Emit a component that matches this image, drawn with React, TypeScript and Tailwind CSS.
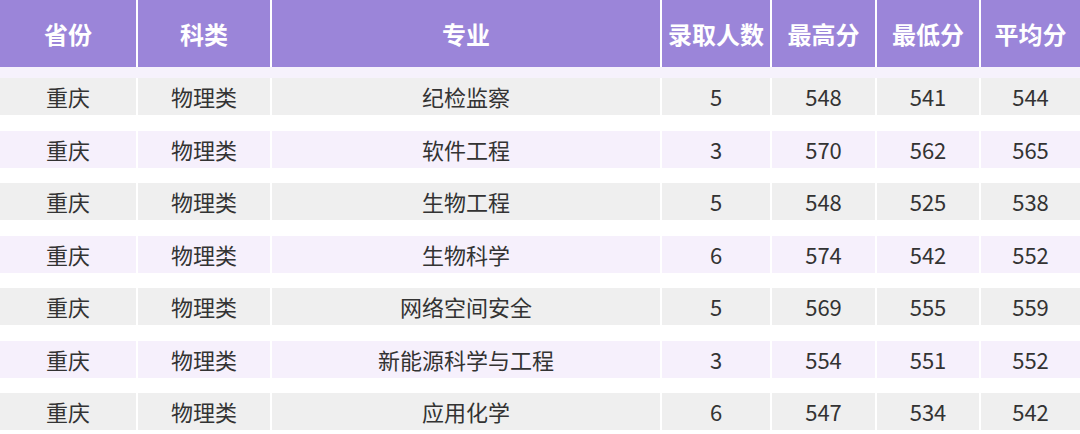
import React from "react";

const rows = [
  ["重庆", "物理类", "纪检监察", "5", "548", "541", "544"],
  ["重庆", "物理类", "软件工程", "3", "570", "562", "565"],
  ["重庆", "物理类", "生物工程", "5", "548", "525", "538"],
  ["重庆", "物理类", "生物科学", "6", "574", "542", "552"],
  ["重庆", "物理类", "网络空间安全", "5", "569", "555", "559"],
  ["重庆", "物理类", "新能源科学与工程", "3", "554", "551", "552"],
  ["重庆", "物理类", "应用化学", "6", "547", "534", "542"],
];

const headers = ["省份", "科类", "专业", "录取人数", "最高分", "最低分", "平均分"];

const grid =
  "grid grid-cols-[136px_132px_388px_108px_103px_102px_1fr] gap-x-[2px]";

export default function App() {
  return (
    <div
      className="w-[1080px] h-[434px] overflow-hidden bg-white"
      style={{ fontFamily: '"Noto Sans CJK SC", "Noto Sans", sans-serif' }}
    >
      <div className={`${grid} h-[67px]`}>
        {headers.map((h) => (
          <div
            key={h}
            className="flex items-center justify-center bg-[#9b85d9] text-white text-[24px] font-bold"
          >
            {h}
          </div>
        ))}
      </div>
      <div className="h-[11px] bg-[#f6f2fc]" />
      <div className="flex flex-col gap-y-[15.5px]">
        {rows.map((r, i) => (
          <div key={i} className={`${grid} h-[37px]`}>
            {r.map((c, j) => (
              <div
                key={j}
                className={`flex items-center justify-center text-[22px] text-[#333333] ${
                  i % 2 === 0 ? "bg-[#efefef]" : "bg-[#f6f0fc]"
                }`}
              >
                {c}
              </div>
            ))}
          </div>
        ))}
      </div>
    </div>
  );
}
